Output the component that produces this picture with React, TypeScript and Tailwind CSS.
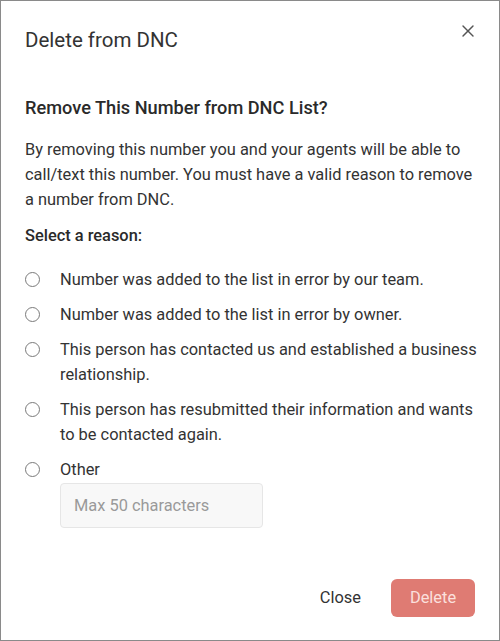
import { X } from "lucide-react";

const reasons = [
  "Number was added to the list in error by our team.",
  "Number was added to the list in error by owner.",
  "This person has contacted us and established a business relationship.",
  "This person has resubmitted their information and wants to be contacted again.",
];

const Radio = ({ label }: { label: string }) => (
  <label className="flex items-start">
    <span className="mt-[5px] h-[15px] w-[15px] shrink-0 rounded-full border-[1.5px] border-[#7a7a7a] bg-white" />
    <span className="ml-[20px] text-[16.4px] leading-[25px] text-[#333]">{label}</span>
  </label>
);

const App = () => {
  return (
    <div
      className="flex h-[641px] w-[500px] flex-col border border-[#8a8a8a] bg-white text-[#333]"
      style={{ fontFamily: "Roboto, 'Liberation Sans', sans-serif" }}
    >
      {/* Header */}
      <div className="flex items-start justify-between pl-6 pr-[21px] pt-[25px]">
        <h2 className="text-[20.5px] leading-[28px] font-normal text-[#333]">Delete from DNC</h2>
        <button className="mt-[-5px] text-[#555]">
          <X className="h-[20px] w-[20px]" strokeWidth={1.7} />
        </button>
      </div>

      {/* Body */}
      <div className="pl-6 pr-[22px]">
        <h3 className="mt-[42px] text-[18.2px] leading-[24px] font-medium text-[#2a2a2a]">
          Remove This Number from DNC List?
        </h3>
        <p className="mt-[17px] text-[16.4px] leading-[25px] text-[#333]">
          By removing this number you and your agents will be able to call/text this number. You must have a valid
          reason to remove a number from DNC.
        </p>
        <p className="mt-[12px] text-[16.4px] leading-[24px] font-medium text-[#2a2a2a]">Select a reason:</p>

        <div className="mt-[19px] flex flex-col gap-[10px]">
          {reasons.map((r) => (
            <Radio key={r} label={r} />
          ))}
          <div>
            <Radio label="Other" />
            <input
              placeholder="Max 50 characters"
              className="mt-[1px] ml-[35px] h-[45px] w-[203px] rounded-[4px] border border-[#e6e6e6] bg-[#f8f8f8] px-[13px] text-[16.4px] text-[#333] placeholder:text-[#9a9a9a] outline-none"
            />
          </div>
        </div>
      </div>

      {/* Footer */}
      <div className="mt-auto flex items-center justify-end gap-[15px] pb-[23px] pr-6">
        <button className="px-[15px] text-[16.4px] leading-[38px] text-[#333]">Close</button>
        <button className="h-[38px] w-[84px] rounded-[6px] bg-[#df7b73] text-[16.4px] text-[#fbe0dd]">Delete</button>
      </div>
    </div>
  );
};

export default App;
